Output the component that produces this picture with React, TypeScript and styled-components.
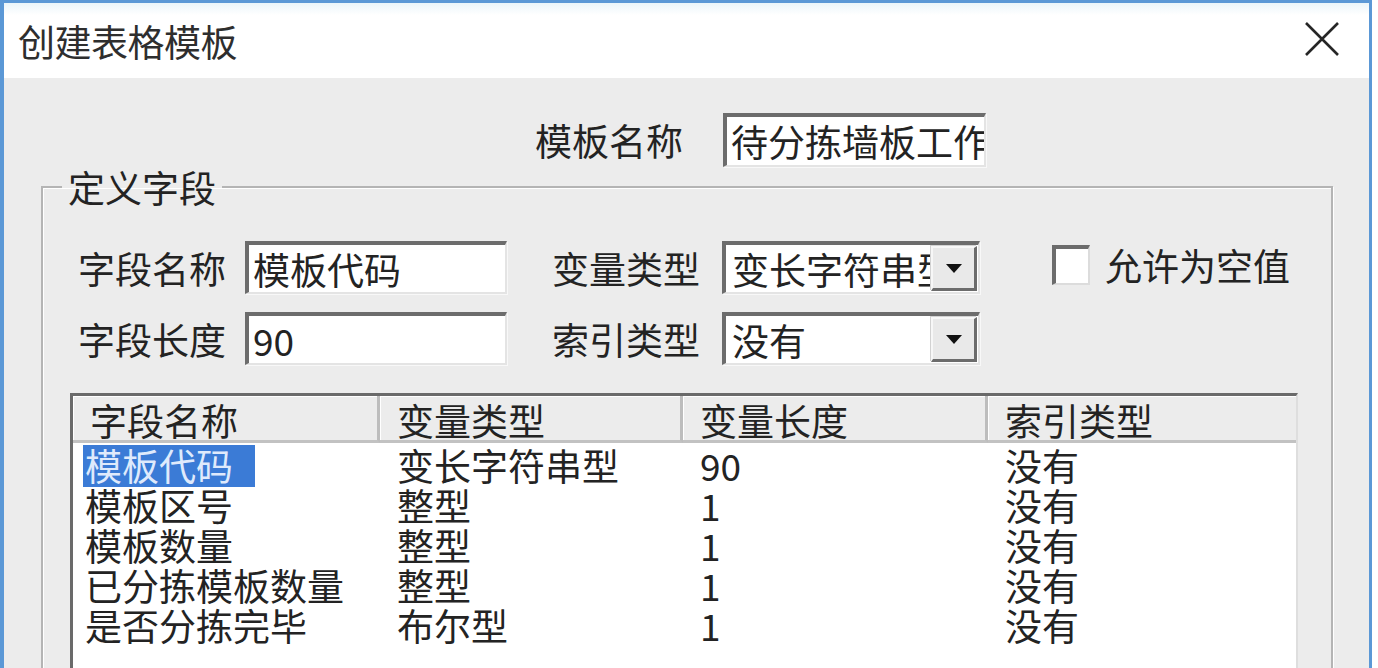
import React from "react";
import styled, { createGlobalStyle } from "styled-components";

const GlobalStyle = createGlobalStyle`
  html, body {
    margin: 0;
    padding: 0;
    background: #ffffff;
    overflow: hidden;
  }
  body {
    width: 1378px;
    height: 668px;
    font-family: "Noto Sans CJK SC", "Noto Sans", sans-serif;
    color: #262626;
  }
`;

const FONT = `"Noto Sans CJK SC", "Noto Sans", sans-serif`;

const Window = styled.div`
  width: 1372px;
  height: 668px;
  box-sizing: border-box;
  border-top: 3px solid #5b98d6;
  border-left: 4px solid #5b98d6;
  border-right: 3px solid #5b98d6;
  background: #ececec;
  display: flex;
  flex-direction: column;
  overflow: hidden;
`;

const TitleBar = styled.div`
  height: 75px;
  flex: none;
  background: linear-gradient(#eaf5fa 0, #ffffff 12px, #ffffff 100%);
  display: flex;
  align-items: center;
  justify-content: space-between;
  padding: 0 29px 0 14px;
`;

const TitleText = styled.div`
  font-family: ${FONT};
  font-size: 37px;
  line-height: 40px;
  color: #2e2e2e;
  letter-spacing: -0.5px;
`;

const CloseButton = styled.div`
  width: 36px;
  height: 36px;
  display: flex;
  align-items: center;
  justify-content: center;
  margin-top: -4px;
`;

const Content = styled.div`
  flex: 1;
  padding: 35px 36px 0 37px;
  display: flex;
  flex-direction: column;
  overflow: hidden;
`;

const NameRow = styled.div`
  display: flex;
  align-items: center;
  padding-left: 494px;
  gap: 40px;
  height: 54px;
`;

const Label = styled.div<{ $indent?: number }>`
  font-family: ${FONT};
  font-size: 37px;
  line-height: 44px;
  color: #232323;
  white-space: nowrap;
  padding-left: ${(p) => p.$indent ?? 0}px;
`;

const Sunken = styled.div<{ $width: number; $height: number }>`
  width: ${(p) => p.$width}px;
  height: ${(p) => p.$height}px;
  box-sizing: border-box;
  background: #ffffff;
  border-top: 4px solid #6c6c6c;
  border-left: 4px solid #6c6c6c;
  border-right: 2px solid #e4e4e4;
  border-bottom: 2px solid #e4e4e4;
  box-shadow: 1px 1px 0 #f8f8f8;
  display: flex;
  align-items: center;
  overflow: hidden;
`;

const FieldText = styled.span`
  font-family: ${FONT};
  font-size: 37px;
  line-height: 44px;
  color: #232323;
  white-space: nowrap;
  padding-left: 4px;
`;

const GroupBox = styled.fieldset`
  margin: 0;
  padding: 0;
  border: 2px solid #b4b4b4;
  box-shadow: inset 1px 1px 0 #ffffff, 1px 1px 0 #ffffff;
  min-height: 600px;
  min-width: 0;
`;

const Legend = styled.legend`
  margin-left: 19px;
  padding: 0 6px;
  font-family: ${FONT};
  font-size: 37px;
  line-height: 40px;
  color: #232323;
`;

const FormGrid = styled.div`
  display: grid;
  grid-template-columns: 167px 262px 215px 258px auto;
  grid-auto-rows: 53px;
  row-gap: 18px;
  align-items: center;
  padding: 34px 0 0 35px;
`;

const ComboText = styled.span`
  flex: 1;
  min-width: 0;
  font-family: ${FONT};
  font-size: 37px;
  line-height: 44px;
  color: #232323;
  white-space: nowrap;
  overflow: hidden;
  padding-left: 6px;
`;

const DropButton = styled.div`
  flex: none;
  width: 46px;
  height: 45px;
  box-sizing: border-box;
  margin-right: 1px;
  background: #e9e9e9;
  border-top: 2px solid #f7f7f7;
  border-left: 2px solid #f7f7f7;
  border-right: 3px solid #6c6c6c;
  border-bottom: 3px solid #6c6c6c;
  box-shadow: -1px -1px 0 #d2d2d2;
  display: flex;
  align-items: center;
  justify-content: center;
`;

const CheckWrap = styled.div`
  display: flex;
  align-items: center;
  gap: 15px;
  padding-left: 72px;
  align-self: start;
  margin-top: 2px;
`;

const CheckBox = styled.div`
  width: 38px;
  height: 40px;
  box-sizing: border-box;
  background: #ffffff;
  border-top: 4px solid #6c6c6c;
  border-left: 4px solid #6c6c6c;
  border-right: 2px solid #dcdcdc;
  border-bottom: 2px solid #dcdcdc;
`;

const ListView = styled.div`
  margin: 28px 33px 0 27px;
  height: 400px;
  background: #ffffff;
  border-top: 3px solid #6a6a6a;
  border-left: 3px solid #6a6a6a;
  border-right: 2px solid #dedede;
  display: grid;
  grid-template-columns: 307px 303px 305px 1fr;
  grid-template-rows: 47px;
  grid-auto-rows: 40px;
  align-content: start;
`;

const HeaderCell = styled.div<{ $last?: boolean }>`
  background: #ececec;
  border-bottom: 3px solid #c2c2c2;
  border-right: ${(p) => (p.$last ? "none" : "3px solid #bdbdbd")};
  box-shadow: inset 1px 1px 0 #ffffff;
  padding-left: 17px;
  font-family: ${FONT};
  font-size: 37px;
  line-height: 48px;
  color: #232323;
  white-space: nowrap;
  overflow: hidden;
`;

const Cell = styled.div<{ $first?: boolean }>`
  padding-left: ${(p) => (p.$first ? 10 : 17)}px;
  font-family: ${FONT};
  font-size: 37px;
  line-height: 40px;
  color: #232323;
  white-space: nowrap;
  margin-top: 2px;
`;

const Selected = styled.span<{ $active: boolean }>`
  display: inline-block;
  padding: 0 22px 0 2px;
  height: 42px;
  line-height: 40px;
  background: ${(p) => (p.$active ? "#3b7bd6" : "transparent")};
  color: ${(p) => (p.$active ? "#dfeafc" : "inherit")};
`;

const Arrow = () => (
  <svg width="16" height="9" viewBox="0 0 16 9">
    <path d="M0 0 H16 L8 9 Z" fill="#111" />
  </svg>
);

type Field = { name: string; type: string; length: string; index: string };

const fields: Field[] = [
  { name: "模板代码", type: "变长字符串型", length: "90", index: "没有" },
  { name: "模板区号", type: "整型", length: "1", index: "没有" },
  { name: "模板数量", type: "整型", length: "1", index: "没有" },
  { name: "已分拣模板数量", type: "整型", length: "1", index: "没有" },
  { name: "是否分拣完毕", type: "布尔型", length: "1", index: "没有" },
];

const columns = ["字段名称", "变量类型", "变量长度", "索引类型"];

export default function App() {
  return (
    <>
      <GlobalStyle />
      <Window>
        <TitleBar>
          <TitleText>创建表格模板</TitleText>
          <CloseButton>
            <svg width="36" height="36" viewBox="0 0 36 36">
              <path d="M2 2 L34 34 M34 2 L2 34" stroke="#262626" strokeWidth="2.6" />
            </svg>
          </CloseButton>
        </TitleBar>
        <Content>
          <NameRow>
            <Label>模板名称</Label>
            <Sunken $width={263} $height={54}>
              <FieldText>待分拣墙板工作</FieldText>
            </Sunken>
          </NameRow>
          <GroupBox>
            <Legend>定义字段</Legend>
            <FormGrid>
              <Label>字段名称</Label>
              <Sunken $width={262} $height={53}>
                <FieldText>模板代码</FieldText>
              </Sunken>
              <Label $indent={45}>变量类型</Label>
              <Sunken $width={258} $height={53}>
                <ComboText>变长字符串型</ComboText>
                <DropButton>
                  <Arrow />
                </DropButton>
              </Sunken>
              <CheckWrap>
                <CheckBox />
                <Label>允许为空值</Label>
              </CheckWrap>

              <Label>字段长度</Label>
              <Sunken $width={262} $height={53}>
                <FieldText>90</FieldText>
              </Sunken>
              <Label $indent={45}>索引类型</Label>
              <Sunken $width={258} $height={53}>
                <ComboText>没有</ComboText>
                <DropButton>
                  <Arrow />
                </DropButton>
              </Sunken>
              <div />
            </FormGrid>
            <ListView>
              {columns.map((c, i) => (
                <HeaderCell key={c} $last={i === columns.length - 1}>
                  {c}
                </HeaderCell>
              ))}
              {fields.map((f, i) => (
                <React.Fragment key={f.name}>
                  <Cell $first>
                    <Selected $active={i === 0}>{f.name}</Selected>
                  </Cell>
                  <Cell>{f.type}</Cell>
                  <Cell>{f.length}</Cell>
                  <Cell>{f.index}</Cell>
                </React.Fragment>
              ))}
            </ListView>
          </GroupBox>
        </Content>
      </Window>
    </>
  );
}
